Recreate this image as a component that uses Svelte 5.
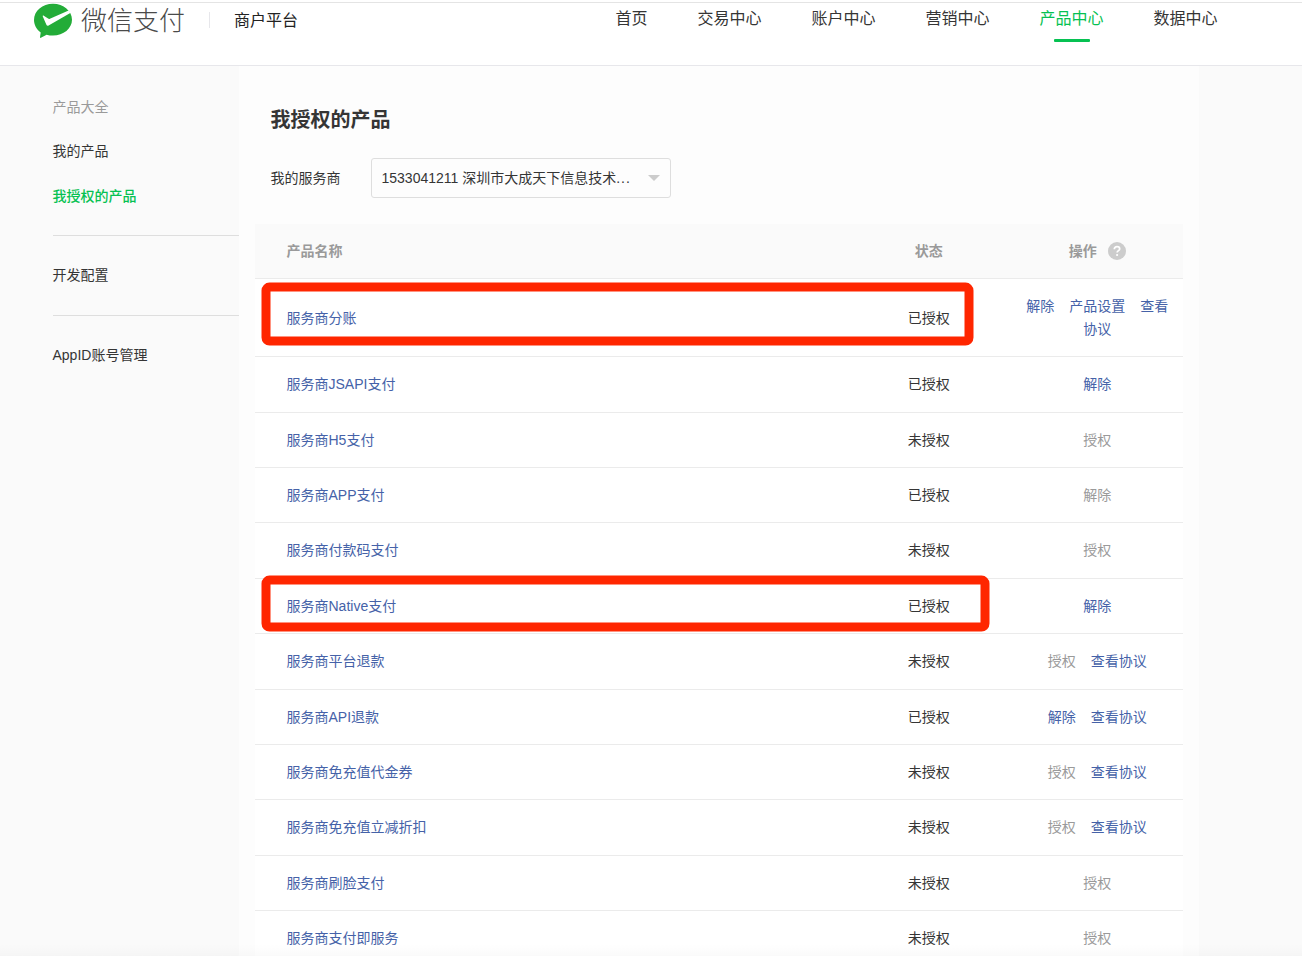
<script>
  const nav = ['首页', '交易中心', '账户中心', '营销中心', '产品中心', '数据中心'];
  const on = '已授权';
  const off = '未授权';
  const link = (text) => ({ text, active: true });
  const muted = (text) => ({ text, active: false });
  const rows = [
    { name: '服务商分账', status: on, actions: [link('解除'), link('产品设置'), link('查看协议')], mark: 'mark-a' },
    { name: '服务商JSAPI支付', status: on, actions: [link('解除')] },
    { name: '服务商H5支付', status: off, actions: [muted('授权')] },
    { name: '服务商APP支付', status: on, actions: [muted('解除')] },
    { name: '服务商付款码支付', status: off, actions: [muted('授权')] },
    { name: '服务商Native支付', status: on, actions: [link('解除')], mark: 'mark-b' },
    { name: '服务商平台退款', status: off, actions: [muted('授权'), link('查看协议')] },
    { name: '服务商API退款', status: on, actions: [link('解除'), link('查看协议')] },
    { name: '服务商免充值代金券', status: off, actions: [muted('授权'), link('查看协议')] },
    { name: '服务商免充值立减折扣', status: off, actions: [muted('授权'), link('查看协议')] },
    { name: '服务商刷脸支付', status: off, actions: [muted('授权')] },
    { name: '服务商支付即服务', status: off, actions: [muted('授权')] }
  ];
</script>

<div class="page">
  <header>
    <svg class="logo" width="40" height="38" viewBox="0 0 40 38">
      <path fill="#23ac38" d="M20 3.800C9.500 3.800 1 11 1 20c0 5 2.600 9.400 6.700 12.400L7 37.200c-.1.700.4.900.9.600l5.700-3.100c2 .6 4.200.9 6.400.9 10.500 0 19-7.200 19-15.800S30.500 3.800 20 3.800z" />
      <path fill="#fff" d="M9.800 16.600c-.3-.9.300-1.300 1-.9l4.300 2.900c.6.400 1.200.4 1.800.1L35.600 10.600c.9 1 1.300 1.600 1.700 2.500L15.600 25.500c-.9.500-1.800.2-2.200-.7z" />
    </svg>
    <span class="brand">微信支付</span>
    <span class="sep"></span>
    <span class="platform">商户平台</span>
    <nav>
      {#each nav as item}
        <a class:current={item === '产品中心'}>{item}</a>
      {/each}
    </nav>
  </header>

  <div class="body">
    <aside>
      <span class="item gray">产品大全</span>
      <span class="item">我的产品</span>
      <span class="item green">我授权的产品</span>
      <hr />
      <span class="item solo">开发配置</span>
      <hr />
      <span class="item solo">AppID账号管理</span>
    </aside>

    <main>
      <h1>我授权的产品</h1>
      <div class="filter">
        <span>我的服务商</span>
        <div class="select">
          <span>1533041211 深圳市大成天下信息技术<span class="dots">...</span></span>
          <i></i>
        </div>
      </div>

      <div class="table">
        <div class="row head">
          <span class="name">产品名称</span>
          <span class="status">状态</span>
          <span class="ops">
            操作
            <svg width="18" height="18" viewBox="0 0 18 18">
              <circle cx="9" cy="9" r="9" fill="#ccc" />
              <path d="M6.300 7.200C6.300 5.600 7.400 4.700 9 4.700s2.700.9 2.700 2.200c0 1.700-2.600 1.800-2.600 3.700" fill="none" stroke="#fff" stroke-width="1.700" />
              <circle cx="9.100" cy="13" r="1.100" fill="#fff" />
            </svg>
          </span>
        </div>
        {#each rows as row}
          <div class="row" class:tall={row.actions.length === 3}>
            <span class="name"><a>{row.name}</a></span>
            <span class="status">{row.status}</span>
            <span class="ops"><span>{#each row.actions as action}<a class:muted={!action.active}>{action.text}</a>{/each}</span></span>
            {#if row.mark}<b class="mark {row.mark}"></b>{/if}
          </div>
        {/each}
      </div>
    </main>
  </div>
  <div class="shade"></div>
</div>

<style>
  :global(body) {
    margin: 0;
    overflow: hidden;
  }
  .page {
    position: relative;
    height: 956px;
    overflow: hidden;
    display: flex;
    flex-direction: column;
    background: #fafafa;
    color: #353535;
    font: 14px/23px 'Liberation Sans', 'Noto Sans CJK SC', sans-serif;
  }
  header {
    flex: none;
    box-sizing: border-box;
    height: 66px;
    padding-left: 33px;
    display: flex;
    align-items: flex-start;
    background: linear-gradient(#e4e4e4, #e4e4e4) 0 2px / 100% 1px no-repeat #fff;
    border-bottom: 1px solid #e7e7eb;
  }
  .logo {
    display: block;
  }
  .brand {
    margin-left: 8px;
    width: 104px;
    font-size: 26px;
    line-height: 42px;
    font-weight: 300;
    color: #4a4a4a;
  }
  .sep {
    width: 1px;
    height: 16px;
    margin: 12px 24px 0;
    background: #e7e7eb;
  }
  .platform {
    font-size: 16px;
    line-height: 42px;
    color: #222;
  }
  nav {
    display: flex;
    gap: 50px;
    margin-left: 317.500px;
    font-size: 16px;
    line-height: 38px;
  }
  nav a {
    display: flex;
    flex-direction: column;
    align-items: center;
  }
  nav .current {
    color: #06c152;
  }
  nav .current::after {
    content: '';
    width: 36px;
    height: 3px;
    margin-top: 1px;
    border-radius: 1px;
    background: #06c152;
  }
  .body {
    flex: 1;
    display: flex;
  }
  aside {
    box-sizing: border-box;
    width: 239px;
    padding: 18.500px 0 0 52.500px;
    display: flex;
    flex-direction: column;
  }
  .item {
    line-height: 44.500px;
  }
  .gray {
    color: #9a9a9a;
  }
  .green {
    color: #06c152;
    font-weight: 500;
  }
  .solo {
    line-height: 79px;
  }
  hr {
    width: 100%;
    height: 1px;
    margin: 0;
    border: 0;
    background: #dedede;
  }
  .green + hr {
    margin-top: 17px;
  }
  main {
    box-sizing: border-box;
    width: 960px;
    padding: 0 16px;
    background: #fdfdfd;
  }
  h1 {
    margin: 38px 0 0 15.500px;
    font-size: 20px;
    line-height: 32px;
    font-weight: 600;
  }
  .filter {
    margin: 22px 0 26px 15.500px;
    display: flex;
    align-items: center;
    gap: 30px;
  }
  .select {
    box-sizing: border-box;
    width: 300px;
    height: 40px;
    padding: 0 10px;
    display: flex;
    align-items: center;
    justify-content: space-between;
    border: 1px solid #dedede;
    border-radius: 3px;
  }
  .dots {
    letter-spacing: 1px;
  }
  .select i {
    border: 6px solid transparent;
    border-top-color: #ccc;
    border-bottom: 0;
  }
  .row {
    position: relative;
    box-sizing: border-box;
    height: 55.400px;
    padding-top: 0.600px;
    display: grid;
    grid-template-columns: 591px 165.500px 171.500px;
    align-items: center;
    background: #fff;
    border-bottom: 1px solid #ebebeb;
  }
  .row.tall {
    height: 78.200px;
  }
  .row.head {
    height: 55px;
    padding-top: 0;
    background: #fafafa;
    color: #9a9a9a;
    font-weight: 600;
  }
  .name {
    padding-left: 31.500px;
  }
  .status {
    text-align: center;
  }
  .tall .name,
  .tall .status {
    padding-top: 1px;
  }
  .ops {
    padding: 0 12px;
    text-align: center;
  }
  .head .ops {
    display: flex;
    align-items: center;
    justify-content: center;
    gap: 11px;
  }
  .row a {
    color: #4562a8;
  }
  .row .muted {
    color: #9a9a9a;
  }
  .ops a + a {
    margin-left: 15px;
  }
  .mark {
    position: absolute;
    z-index: 1;
    box-sizing: border-box;
    left: 7px;
    border: 9px solid #ff2600;
    border-radius: 8px;
    transform: translate(-0.500px, -0.400px);
  }
  .mark-a {
    top: 4px;
    width: 712px;
    height: 63px;
  }
  .mark-b {
    top: -3px;
    width: 728px;
    height: 56px;
  }
  .shade {
    position: absolute;
    inset: auto 0 0;
    height: 12px;
    background: linear-gradient(transparent, rgba(0, 0, 0, 0.02));
  }
</style>
